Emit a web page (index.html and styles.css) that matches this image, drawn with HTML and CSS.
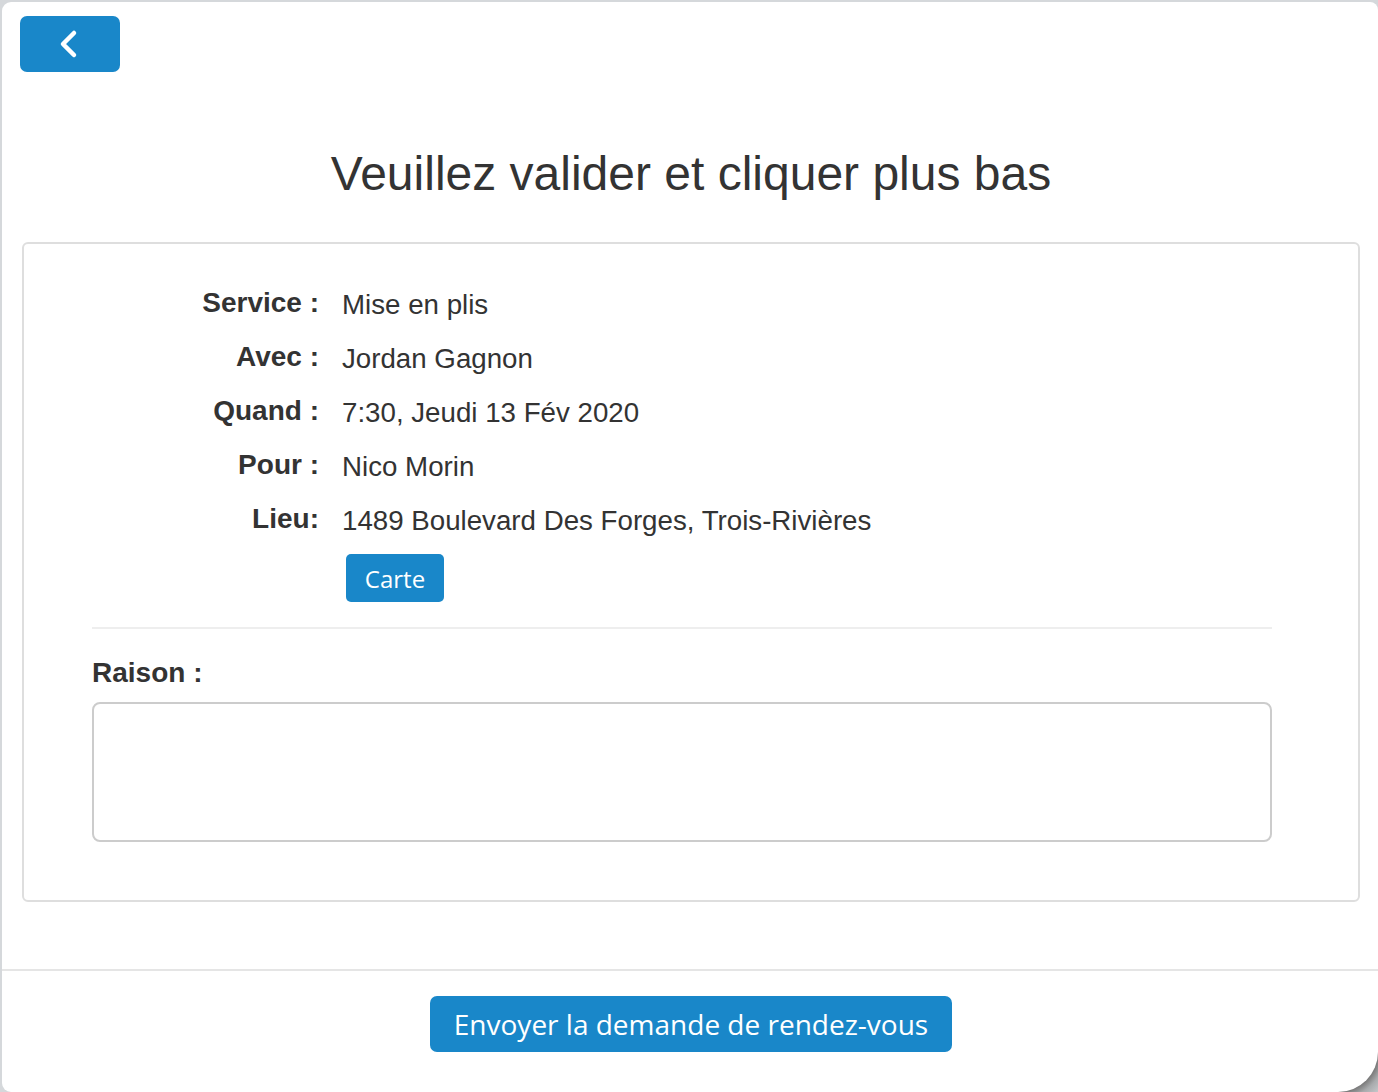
FILE: index.html
```html
<!DOCTYPE html>
<html lang="fr">
<head>
<meta charset="utf-8">
<title>Validation</title>
<link rel="stylesheet" href="styles.css">
</head>
<body>
<div class="panel">
  <div class="top">
    <button class="back" type="button" aria-label="Retour">
      <svg width="100" height="56" viewBox="0 0 100 56"><path d="M54 17 L43 28 L54 39" fill="none" stroke="#fff" stroke-width="4.5" stroke-linecap="round" stroke-linejoin="round"/></svg>
    </button>
  </div>
  <h1 class="title">Veuillez valider et cliquer plus bas</h1>
  <div class="card">
    <div class="details">
      <div class="row"><span class="label">Service :</span><span class="value">Mise en plis</span></div>
      <div class="row"><span class="label">Avec :</span><span class="value">Jordan Gagnon</span></div>
      <div class="row"><span class="label">Quand :</span><span class="value">7:30, Jeudi 13 Fév 2020</span></div>
      <div class="row"><span class="label">Pour :</span><span class="value">Nico Morin</span></div>
      <div class="row"><span class="label">Lieu:</span><span class="value">1489 Boulevard Des Forges, Trois-Rivières</span></div>
      <div class="row-btn"><button class="btn-map" type="button">Carte</button></div>
    </div>
    <div class="sep"></div>
    <label class="reason-label" for="raison">Raison :</label>
    <textarea id="raison" class="reason"></textarea>
  </div>
  <div class="footer">
    <button class="send" type="button">Envoyer la demande de rendez-vous</button>
  </div>
</div>
</body>
</html>
```

FILE: styles.css
```css
html {
  height: 100%;
  background-color: #d5d8db;
  background-image: radial-gradient(circle at 10px 10px, #7a7a7a 40px, #a9abad 47px, #d5d8db 62px);
  background-repeat: no-repeat;
  background-position: right bottom;
  background-size: 50px 50px;
}
body {
  margin: 0;
  height: 100%;
  overflow: hidden;
  font-family: "Liberation Sans", Arial, sans-serif;
  color: #333;
}
.panel {
  margin: 2px 0 0 2px;
  width: 1376px;
  height: 1090px;
  background: #fff;
  border-radius: 9px 8px 40px 9px;
  display: flex;
  flex-direction: column;
}
.top {
  padding: 14px 0 0 18px;
  display: flex;
}
.back {
  width: 100px;
  height: 56px;
  padding: 0;
  border: 0;
  border-radius: 7px;
  background: #1987c9;
  display: block;
}
.back svg { display: block; }
.title {
  margin: 74px 0 0 0;
  padding-left: 2px;
  font-size: 48px;
  line-height: 56px;
  font-weight: normal;
  text-align: center;
  color: #333;
}
.card {
  margin: 40px 18px 0 20px;
  border: 2px solid #dedede;
  border-radius: 6px;
  padding: 34px 86px 58px 68px;
  display: flex;
  flex-direction: column;
}
.details {
  display: flex;
  flex-direction: column;
}
.row {
  display: flex;
  align-items: flex-start;
  gap: 23px;
  height: 54px;
}
.label {
  width: 227px;
  text-align: right;
  font-weight: bold;
  font-size: 28px;
  line-height: 50px;
}
.value {
  font-size: 27.7px;
  line-height: 54px;
}
.row-btn {
  padding: 6px 0 0 254px;
  display: flex;
}
.btn-map {
  width: 98px;
  height: 48px;
  border: 0;
  border-radius: 5px;
  background: #1987c9;
  color: #fff;
  font-family: "Open Sans", sans-serif;
  font-size: 24px;
  padding: 0;
}
.sep {
  margin-top: 25px;
  height: 2px;
  background: #eeeeee;
}
.reason-label {
  margin-top: 27px;
  font-weight: bold;
  font-size: 28px;
  line-height: 34px;
}
.reason {
  margin-top: 12px;
  height: 140px;
  box-sizing: border-box;
  border: 2px solid #cccccc;
  border-radius: 8px;
  resize: none;
  font-family: "Liberation Sans", Arial, sans-serif;
  font-size: 28px;
}
.footer {
  margin-top: 67px;
  border-top: 2px solid #e5e5e5;
  padding: 25px 0 0 2px;
  display: flex;
  justify-content: center;
}
.send {
  width: 522px;
  height: 56px;
  border: 0;
  border-radius: 7px;
  background: #1987c9;
  color: #fff;
  font-family: "Open Sans", sans-serif;
  font-size: 28px;
  padding: 0;
}
```
